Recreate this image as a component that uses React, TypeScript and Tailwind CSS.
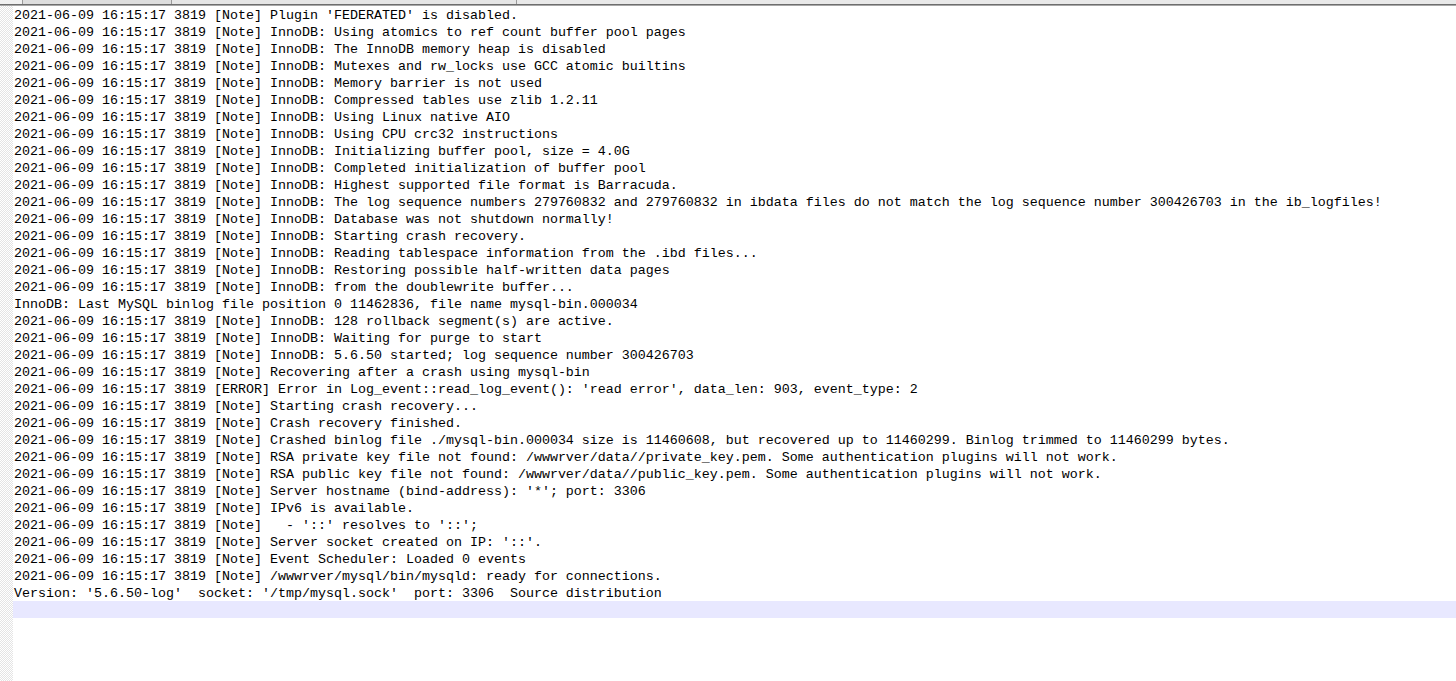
const lines = [
  "2021-06-09 16:15:17 3819 [Note] Plugin 'FEDERATED' is disabled.",
  "2021-06-09 16:15:17 3819 [Note] InnoDB: Using atomics to ref count buffer pool pages",
  "2021-06-09 16:15:17 3819 [Note] InnoDB: The InnoDB memory heap is disabled",
  "2021-06-09 16:15:17 3819 [Note] InnoDB: Mutexes and rw_locks use GCC atomic builtins",
  "2021-06-09 16:15:17 3819 [Note] InnoDB: Memory barrier is not used",
  "2021-06-09 16:15:17 3819 [Note] InnoDB: Compressed tables use zlib 1.2.11",
  "2021-06-09 16:15:17 3819 [Note] InnoDB: Using Linux native AIO",
  "2021-06-09 16:15:17 3819 [Note] InnoDB: Using CPU crc32 instructions",
  "2021-06-09 16:15:17 3819 [Note] InnoDB: Initializing buffer pool, size = 4.0G",
  "2021-06-09 16:15:17 3819 [Note] InnoDB: Completed initialization of buffer pool",
  "2021-06-09 16:15:17 3819 [Note] InnoDB: Highest supported file format is Barracuda.",
  "2021-06-09 16:15:17 3819 [Note] InnoDB: The log sequence numbers 279760832 and 279760832 in ibdata files do not match the log sequence number 300426703 in the ib_logfiles!",
  "2021-06-09 16:15:17 3819 [Note] InnoDB: Database was not shutdown normally!",
  "2021-06-09 16:15:17 3819 [Note] InnoDB: Starting crash recovery.",
  "2021-06-09 16:15:17 3819 [Note] InnoDB: Reading tablespace information from the .ibd files...",
  "2021-06-09 16:15:17 3819 [Note] InnoDB: Restoring possible half-written data pages",
  "2021-06-09 16:15:17 3819 [Note] InnoDB: from the doublewrite buffer...",
  "InnoDB: Last MySQL binlog file position 0 11462836, file name mysql-bin.000034",
  "2021-06-09 16:15:17 3819 [Note] InnoDB: 128 rollback segment(s) are active.",
  "2021-06-09 16:15:17 3819 [Note] InnoDB: Waiting for purge to start",
  "2021-06-09 16:15:17 3819 [Note] InnoDB: 5.6.50 started; log sequence number 300426703",
  "2021-06-09 16:15:17 3819 [Note] Recovering after a crash using mysql-bin",
  "2021-06-09 16:15:17 3819 [ERROR] Error in Log_event::read_log_event(): 'read error', data_len: 903, event_type: 2",
  "2021-06-09 16:15:17 3819 [Note] Starting crash recovery...",
  "2021-06-09 16:15:17 3819 [Note] Crash recovery finished.",
  "2021-06-09 16:15:17 3819 [Note] Crashed binlog file ./mysql-bin.000034 size is 11460608, but recovered up to 11460299. Binlog trimmed to 11460299 bytes.",
  "2021-06-09 16:15:17 3819 [Note] RSA private key file not found: /wwwrver/data//private_key.pem. Some authentication plugins will not work.",
  "2021-06-09 16:15:17 3819 [Note] RSA public key file not found: /wwwrver/data//public_key.pem. Some authentication plugins will not work.",
  "2021-06-09 16:15:17 3819 [Note] Server hostname (bind-address): '*'; port: 3306",
  "2021-06-09 16:15:17 3819 [Note] IPv6 is available.",
  "2021-06-09 16:15:17 3819 [Note]   - '::' resolves to '::';",
  "2021-06-09 16:15:17 3819 [Note] Server socket created on IP: '::'.",
  "2021-06-09 16:15:17 3819 [Note] Event Scheduler: Loaded 0 events",
  "2021-06-09 16:15:17 3819 [Note] /wwwrver/mysql/bin/mysqld: ready for connections.",
  "Version: '5.6.50-log'  socket: '/tmp/mysql.sock'  port: 3306  Source distribution",
];

export default function App() {
  return (
    <div className="h-[681px] w-[1456px] overflow-hidden bg-white flex flex-col">
      {/* leftover of the tab bar */}
      <div className="flex h-[4px] shrink-0 bg-[#e9e9e9]">
        <div className="w-[23px] border-r border-[#9a9a9a] bg-[#f0f0f0]" />
        <div className="w-[149px] border-r border-[#9a9a9a] bg-[#dedede]" />
        <div className="w-[345px] border-r border-[#9a9a9a] bg-[#e6e6e6]" />
        <div className="flex-1" />
      </div>
      <div className="h-[2px] shrink-0 border-t border-[#6e6e6e] bg-[#a8a8a8]" />

      <div className="flex flex-1">
        <div className="w-[13px] shrink-0 bg-[repeating-conic-gradient(#e4e4e4_0_25%,#ffffff_0_50%)] bg-[length:2px_2px]" />
        <div className="flex-1 font-['Liberation_Mono','Courier_New',monospace] text-[13.333px] leading-[19px] text-black">
          {lines.map((line, i) => (
            <div key={i} className="h-[17px] pl-px whitespace-pre">
              {line}
            </div>
          ))}
          <div className="h-[17px] bg-[#e8e8ff]" />
        </div>
      </div>
    </div>
  );
}
